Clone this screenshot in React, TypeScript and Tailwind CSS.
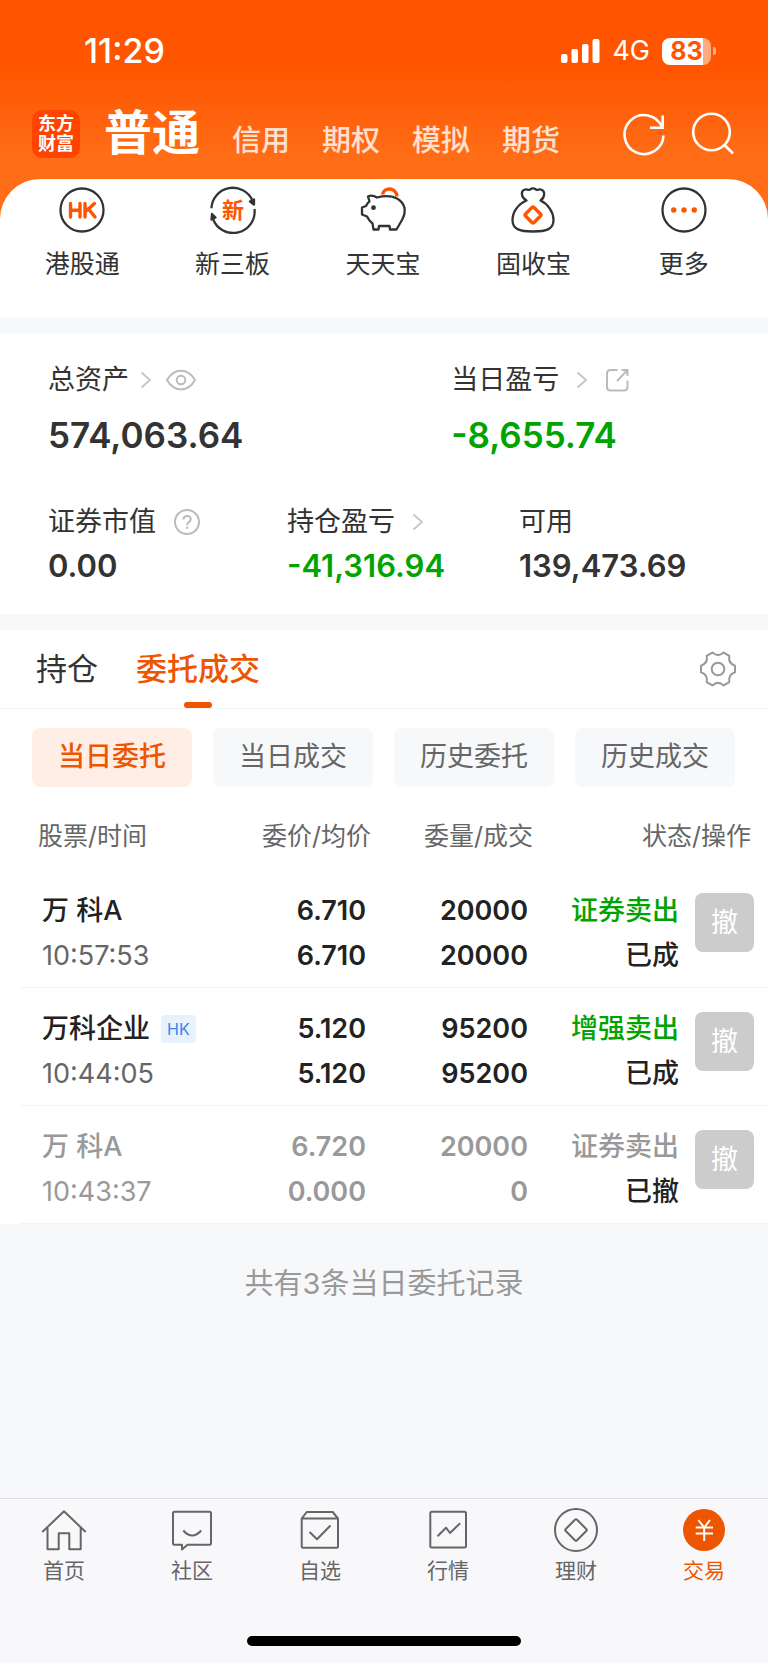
import type { ReactNode } from 'react'

interface IconProps {
  children: ReactNode
  stroke?: string
  width?: number
}

/** 48x48 line icon frame shared by the header, shortcuts and tab bar. */
function Icon({ children, stroke = '#333333', width = 2 }: IconProps) {
  return (
    <svg
      viewBox="0 0 48 48"
      className="size-12 shrink-0"
      fill="none"
      stroke={stroke}
      strokeWidth={width}
      strokeLinejoin="round"
      aria-hidden="true"
    >
      {children}
    </svg>
  )
}

const ACCOUNT_TYPES = ['信用', '期权', '模拟', '期货']

const SHORTCUTS: { label: string; icon: ReactNode }[] = [
  {
    label: '港股通',
    icon: (
      <Icon width={2.3}>
        <circle cx="24" cy="24" r="21.5" />
        <path
          d="M12.5 17.5V31M22 17.5V31M12.5 24.3H22M27 17.5V31M36.5 17.5 28 25M30.5 23 37 31"
          stroke="#ff5500"
          strokeWidth="3.4"
          strokeLinecap="round"
        />
      </Icon>
    ),
  },
  {
    label: '新三板',
    icon: (
      <Icon width={2.3}>
        <path d="M2.4 22.3A21.5 21.5 0 0 1 43.5 14.5M45.5 23A21.5 21.5 0 0 1 4 33" />
        <path d="M41 15.5 45 13.5 45 18.5ZM2.5 33.5 3 28 6.5 31.5Z" fill="#333333" />
        <text
          x="24"
          y="32"
          textAnchor="middle"
          fontSize="22"
          fontWeight="700"
          fill="#ff5500"
          stroke="none"
        >
          新
        </text>
      </Icon>
    ),
  },
  {
    label: '天天宝',
    icon: (
      <Icon width={2.3}>
        <path d="M23.5 8.5C25 0.8 37 0.8 38 10.5" stroke="#ff5500" strokeWidth="3.4" />
        <path d="M9 10.5C12 9 15.5 10 18 11.5C26 9.5 33 10 38 12.5C46 17 48 25 43 34L37.5 43.5H31L30.5 40H20L19.5 43.5H14.5L13.5 37.5C11.5 36 9.5 33.5 8 30.5L3 28.5V21.5L7 20C8 17.5 9.5 16 10.5 15.5Z" />
        <circle cx="14.5" cy="21.7" r="2.4" fill="#333333" stroke="none" />
      </Icon>
    ),
  },
  {
    label: '固收宝',
    icon: (
      <Icon width={2.3}>
        <path d="M17.5 14.5C12.5 12 11 5 16 3.5C18 3 19.5 4.500 21 3.5C23 2 25 2 27 3.5C28.5 4.5 30 3 32 3.5C37 5 35.5 12 31.5 14.5C39 18 44.500 26 44.5 34C44.5 43 38 45.5 24 45.5C10 45.5 3.5 43 3.5 34C3.5 26 9 18 17.5 14.5Z" />
        <rect
          x="18"
          y="23"
          width="12"
          height="12"
          rx="1.5"
          transform="rotate(45 24 29)"
          stroke="#ff5500"
          strokeWidth="3.4"
        />
      </Icon>
    ),
  },
  {
    label: '更多',
    icon: (
      <Icon width={2.3}>
        <circle cx="24" cy="24" r="21.5" />
        <g fill="#ff5500" stroke="none">
          <circle cx="13.7" cy="24" r="2.7" />
          <circle cx="24" cy="24" r="2.7" />
          <circle cx="34.3" cy="24" r="2.7" />
        </g>
      </Icon>
    ),
  },
]

const ORDER_FILTERS = ['当日委托', '当日成交', '历史委托', '历史成交']

interface Order {
  name: string
  market?: string
  time: string
  price: string
  average: string
  quantity: string
  filled: string
  side: string
  status: string
  cancelled?: boolean
}

const ORDERS: Order[] = [
  {
    name: '万 科A',
    time: '10:57:53',
    price: '6.710',
    average: '6.710',
    quantity: '20000',
    filled: '20000',
    side: '证券卖出',
    status: '已成',
  },
  {
    name: '万科企业',
    market: 'HK',
    time: '10:44:05',
    price: '5.120',
    average: '5.120',
    quantity: '95200',
    filled: '95200',
    side: '增强卖出',
    status: '已成',
  },
  {
    name: '万 科A',
    time: '10:43:37',
    price: '6.720',
    average: '0.000',
    quantity: '20000',
    filled: '0',
    side: '证券卖出',
    status: '已撤',
    cancelled: true,
  },
]

const NAV_ITEMS: { label: string; icon: ReactNode; active?: boolean }[] = [
  {
    label: '首页',
    icon: (
      <Icon stroke="#666666">
        <path d="M2.3 26 24 5.3 45.7 26M7.5 22V43.3H18.7V27.3H29.3V43.3H40.7V22" />
      </Icon>
    ),
  },
  {
    label: '社区',
    icon: (
      <Icon stroke="#666666">
        <path d="M6.5 5.7H41.5Q43 5.7 43 7.2V37.2Q43 38.7 41.5 38.7H19.5L14 43.5V38.7H6.5Q5 38.7 5 37.2V7.2Q5 5.7 6.5 5.7Z" />
        <path d="M15.3 24.5Q24.2 34.5 33.2 24.5" />
      </Icon>
    ),
  },
  {
    label: '自选',
    icon: (
      <Icon stroke="#666666">
        <path d="M5.7 12.5H42V40.2Q42 41.7 40.5 41.7H7.2Q5.7 41.7 5.7 40.2ZM5.7 12.5 10.7 6H36.7L42 12.5" />
        <path d="M13.5 26 21 33.3 34.5 19.5" />
      </Icon>
    ),
  },
  {
    label: '行情',
    icon: (
      <Icon stroke="#666666">
        <rect x="6.3" y="5.8" width="35.7" height="35.7" rx="1.5" />
        <path d="M13.5 30.3 22 21.7 26 27 36.2 17.2" />
      </Icon>
    ),
  },
  {
    label: '理财',
    icon: (
      <Icon stroke="#666666">
        <circle cx="24" cy="24" r="21" />
        <rect x="16" y="16" width="16" height="16" rx="1.5" transform="rotate(45 24 24)" />
      </Icon>
    ),
  },
  {
    label: '交易',
    active: true,
    icon: (
      <Icon stroke="#ffffff">
        <circle cx="24" cy="24" r="21" fill="#ee5500" stroke="none" />
        <path d="M18.3 14 24.2 21.5 30 14M24.2 21.5V35M15.7 21.5H33M15.7 27.5H33" />
      </Icon>
    ),
  },
]

function Chevron() {
  return (
    <svg viewBox="0 0 12 18" className="h-[18px] w-3" fill="none" stroke="#c4c4c4" strokeWidth="1.8" aria-hidden="true">
      <path d="M1.5 1.5 10 9 1.5 16.5" />
    </svg>
  )
}

function StatusBar() {
  return (
    <div className="flex h-[102px] items-center justify-between pl-[84px] pr-[52px]">
      <span className="text-[34px] font-medium leading-10">11:29</span>
      <div className="flex items-center">
        <svg viewBox="0 0 39 24" className="h-6 w-[39px]" fill="currentColor" role="img" aria-label="信号">
          <rect x="0" y="15" width="6.5" height="9" rx="2" />
          <rect x="10.5" y="10" width="6.5" height="14" rx="2" />
          <rect x="21" y="5" width="6.5" height="19" rx="2" />
          <rect x="31.5" y="0" width="7" height="24" rx="2" />
        </svg>
        <span className="ml-3 text-[27px] leading-10">4G</span>
        <span className="ml-3 flex h-[27px] w-[49px] items-center justify-center rounded-lg bg-linear-to-r from-white from-84% to-white/50 to-84% text-[25px] font-bold leading-7 text-[#ff5500]">
          83
        </span>
        <span className="ml-0.5 h-2 w-[3px] rounded-r-full bg-white/50" />
      </div>
    </div>
  )
}

function Header() {
  return (
    <header className="bg-linear-to-b from-[#ff5500] from-40% to-[#ff6e17] to-90% text-white">
      <StatusBar />
      <div className="flex h-[77px] items-start justify-between pl-8 pr-[30px]">
        <div className="flex items-start">
          <div className="mt-2 flex size-12 flex-col items-center justify-center rounded-[10px] bg-[#ff4400] text-[18px] font-bold leading-5">
            <span>东方</span>
            <span>财富</span>
          </div>
          <nav className="ml-6 flex items-end">
            <button type="button" className="text-[48px] font-bold leading-[62px]">
              普通
            </button>
            <div className="ml-8 flex gap-8">
              {ACCOUNT_TYPES.map((type) => (
                <button key={type} type="button" className="text-[29px] font-medium leading-[46px] text-white/80">
                  {type}
                </button>
              ))}
            </div>
          </nav>
        </div>
        <div className="mt-2 flex gap-[22px]">
          <button type="button" aria-label="刷新">
            <Icon stroke="#ffffff" width={2.6}>
              <path d="M43.5 25.5A19.5 19.5 0 1 1 42 17M42.7 5.5V17.7H30" strokeLinejoin="miter" />
            </Icon>
          </button>
          <button type="button" aria-label="搜索">
            <Icon stroke="#ffffff" width={2.6}>
              <circle cx="21.5" cy="22" r="18.3" />
              <path d="M34 34.5 43 43.5" />
            </Icon>
          </button>
        </div>
      </div>
    </header>
  )
}

function Shortcuts() {
  return (
    <div className="bg-[#ff6e17]">
      <ul className="grid h-[138px] grid-cols-5 rounded-t-[40px] bg-white pl-[7px] pr-[9px] pt-[7px]">
        {SHORTCUTS.map(({ label, icon }) => (
          <li key={label}>
            <button type="button" className="flex w-full flex-col items-center gap-3 text-[25px] leading-9">
              {icon}
              {label}
            </button>
          </li>
        ))}
      </ul>
    </div>
  )
}

function Assets() {
  return (
    <section className="mt-4 bg-white px-12 pb-7 pt-[27px]">
      <dl className="flex">
        <div className="w-[60%]">
          <dt className="flex h-10 items-center text-[27px]">
            总资产
            <span className="ml-[11px] flex">
              <Chevron />
            </span>
            <button type="button" aria-label="隐藏资产" className="ml-3.5">
              <svg viewBox="0 0 30 22" className="h-[22px] w-[30px]" fill="none" stroke="#bbbbbb" strokeWidth="2">
                <path d="M1 11C8 -1.5 22 -1.5 29 11C22 23.5 8 23.5 1 11Z" strokeLinejoin="round" />
                <circle cx="15" cy="11" r="4.3" />
              </svg>
            </button>
          </dt>
          <dd className="mt-2.5 text-[35px] font-semibold leading-[50px]">574,063.64</dd>
        </div>
        <div>
          <dt className="flex h-10 items-center text-[27px]">
            当日盈亏
            <span className="ml-[17px] flex">
              <Chevron />
            </span>
            <button type="button" aria-label="分享" className="ml-[17px]">
              <svg viewBox="0 0 24 24" className="size-6" fill="none" stroke="#bbbbbb" strokeWidth="2">
                <path d="M12.5 2H5.5Q2 2 2 5.5V19Q2 22.5 5.5 22.5H19Q22.5 22.5 22.5 19V12.5" />
                <path d="M16.5 2H22.5V8M22.5 2 12 13" />
              </svg>
            </button>
          </dt>
          <dd className="mt-2.5 text-[35px] font-semibold leading-[50px] text-[#00a300]">-8,655.74</dd>
        </div>
      </dl>
      <dl className="mt-[42px] flex">
        <div className="w-[239px]">
          <dt className="flex h-10 items-center text-[27px]">
            证券市值
            <button type="button" aria-label="说明" className="ml-[17px]">
              <svg viewBox="0 0 28 28" className="size-7" fill="none" stroke="#bbbbbb" strokeWidth="2">
                <circle cx="14" cy="14" r="12" />
                <path d="M10.5 11.5C10.5 6.8 17.8 6.8 17.8 11.3C17.8 14 14.1 14.2 14.1 17.2M14.1 18.7V20.8" />
              </svg>
            </button>
          </dt>
          <dd className="mt-1 text-[31px] font-semibold leading-10">0.00</dd>
        </div>
        <div className="w-[232px]">
          <dt className="flex h-10 items-center text-[27px]">
            持仓盈亏
            <span className="ml-[17px] flex">
              <Chevron />
            </span>
          </dt>
          <dd className="mt-1 text-[31px] font-semibold leading-10 text-[#00a300]">-41,316.94</dd>
        </div>
        <div>
          <dt className="flex h-10 items-center text-[27px]">可用</dt>
          <dd className="mt-1 text-[31px] font-semibold leading-10">139,473.69</dd>
        </div>
      </dl>
    </section>
  )
}

function OrderRow({ order }: { order: Order }) {
  const text = order.cancelled ? 'text-[#999999]' : 'text-[#222222]'
  const time = order.cancelled ? 'text-[#999999]' : 'text-[#666666]'
  const side = order.cancelled ? 'text-[#999999]' : 'text-[#00a300]'

  return (
    <tr className={`h-[118px] border-b border-[#f2f3f5] text-[27px] font-medium leading-[45px] ${text}`}>
      <td className="pb-1.5 pl-[22px] pt-4 text-left">
        <div className="flex items-center">
          {order.name}
          {order.market != null ? (
            <span className="ml-[11px] rounded bg-[#e8f2fd] px-1.5 text-[16px] font-normal leading-7 text-[#3388ee]">
              {order.market}
            </span>
          ) : null}
        </div>
        <div className={`font-normal ${time}`}>{order.time}</div>
      </td>
      <td className="pb-1.5 pr-[5px] pt-4 text-right font-semibold">
        <div>{order.price}</div>
        <div>{order.average}</div>
      </td>
      <td className="pb-1.5 pr-[5px] pt-4 text-right font-semibold">
        <div>{order.quantity}</div>
        <div>{order.filled}</div>
      </td>
      <td className="pb-1.5 pr-[5px] pt-4 text-right">
        <div className={side}>{order.side}</div>
        <div className="text-[#222222]">{order.status}</div>
      </td>
      <td className="pb-2.5 pl-[11px]">
        <button type="button" className="block size-[59px] rounded-lg bg-[#cccccc] text-[27px] font-normal text-white">
          撤
        </button>
      </td>
    </tr>
  )
}

function Orders() {
  return (
    <section className="mt-4 bg-white">
      <div className="flex h-[79px] items-center border-b border-[#f2f3f5] pl-9 pr-[30px]">
        <button type="button" className="text-[31px] leading-10">
          持仓
        </button>
        <button type="button" className="relative ml-[38px] h-full text-[31px] font-medium leading-10 text-[#ee5500]">
          委托成交
          <span className="absolute bottom-0 left-1/2 h-1.5 w-7 -translate-x-1/2 rounded-sm bg-[#ee5500]" />
        </button>
        <button type="button" aria-label="设置" className="ml-auto">
          <svg viewBox="-20 -20 40 40" className="size-10" fill="none" stroke="#999999" strokeWidth="2" strokeLinejoin="round">
            <path d="M17 -3.3V3.3Q9.9 5.7 11.3 13.1L5.6 16.4Q0 11.4 -5.6 16.4L-11.3 13.1Q-9.9 5.7 -17 3.3V-3.3Q-9.9 -5.7 -11.3 -13.1L-5.6 -16.4Q0 -11.4 5.6 -16.4L11.3 -13.1Q9.9 -5.7 17 -3.3Z" />
            <circle r="6.3" />
          </svg>
        </button>
      </div>
      <div className="grid grid-cols-4 gap-[21px] pl-8 pr-[33px] pt-[19px]">
        {ORDER_FILTERS.map((filter, index) => (
          <button
            key={filter}
            type="button"
            className={`h-[59px] rounded-lg text-[27px] ${
              index === 0 ? 'bg-[#feeee6] font-medium text-[#ee5500]' : 'bg-[#f7f8fa] text-[#666666]'
            }`}
          >
            {filter}
          </button>
        ))}
      </div>
      <div className="pl-5">
        <table className="w-full table-fixed border-collapse">
          <colgroup>
            <col />
            <col className="w-[131px]" />
            <col className="w-[162px]" />
            <col className="w-[151px]" />
            <col className="w-[84px]" />
          </colgroup>
          <thead>
            <tr className="h-[82px] whitespace-nowrap text-[25px] text-[#666666]">
              <th className="pl-[18px] pt-[18px] text-left font-normal">股票/时间</th>
              <th className="pt-[18px] text-right font-normal">委价/均价</th>
              <th className="pt-[18px] text-right font-normal">委量/成交</th>
              <th colSpan={2} className="pr-[17px] pt-[18px] text-right font-normal">
                状态/操作
              </th>
            </tr>
          </thead>
          <tbody>
            {ORDERS.map((order) => (
              <OrderRow key={order.time} order={order} />
            ))}
          </tbody>
        </table>
      </div>
    </section>
  )
}

function BottomNav() {
  return (
    <footer className="mt-auto border-t border-[#dddddf] bg-[#f8f8fb] pb-[17px] pt-[7px]">
      <nav className="grid grid-cols-6">
        {NAV_ITEMS.map(({ label, icon, active }) => (
          <a
            key={label}
            href="#"
            className={`flex flex-col items-center text-[21px] leading-[34px] ${
              active ? 'text-[#ee5500]' : 'text-[#666666]'
            }`}
          >
            {icon}
            {label}
          </a>
        ))}
      </nav>
      <div className="mx-auto mt-[48px] h-2.5 w-[274px] rounded-full bg-black" />
    </footer>
  )
}

function App() {
  return (
    <div className="flex min-h-screen flex-col bg-[#f7f8fa] font-[Inter,'Noto_Sans_CJK_SC',sans-serif] text-[#333333]">
      <Header />
      <main>
        <Shortcuts />
        <Assets />
        <Orders />
        <p className="py-10 text-center text-[29px] leading-10 text-[#999999]">共有3条当日委托记录</p>
      </main>
      <BottomNav />
    </div>
  )
}

export default App
